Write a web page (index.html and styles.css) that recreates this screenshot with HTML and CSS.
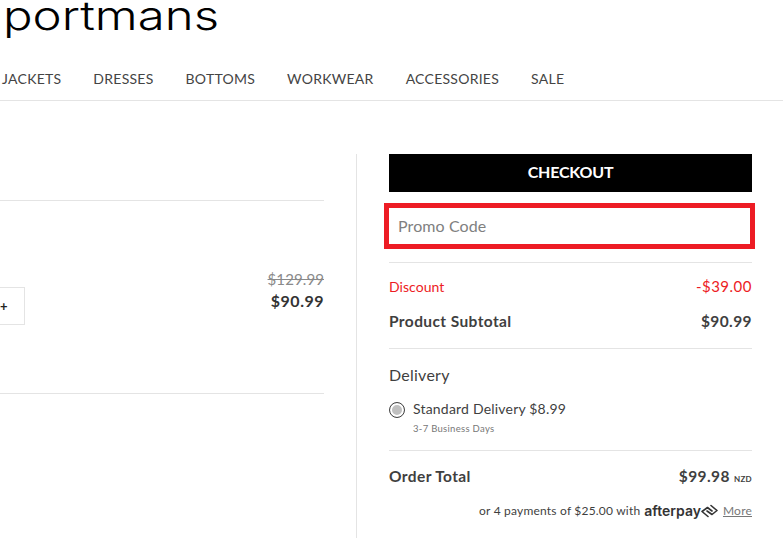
FILE: index.html
```html
<!DOCTYPE html>
<html lang="en">
<head>
<meta charset="utf-8">
<title>Portmans - Shopping Bag</title>
<link rel="stylesheet" href="styles.css">
</head>
<body>
<header class="site-header">
  <svg class="logo" width="222" height="42" viewBox="0 0 222 42" role="img" aria-label="portmans">
    <text class="logo-text" x="3" y="30" textLength="216" lengthAdjust="spacingAndGlyphs">portmans</text>
  </svg>
  <nav class="nav">
    <a>JACKETS</a><a>DRESSES</a><a>BOTTOMS</a><a>WORKWEAR</a><a>ACCESSORIES</a><a>SALE</a>
  </nav>
</header>
<main class="cart">
  <section class="items">
    <div class="item">
      <div class="qty"><span class="plus">+</span></div>
      <div class="item-price">
        <div class="was">$129.99</div>
        <div class="now">$90.99</div>
      </div>
    </div>
  </section>
  <aside class="summary">
    <button class="checkout">CHECKOUT</button>
    <div class="promo"><span class="promo-hint">Promo Code</span></div>
    <div class="totals">
      <div class="row discount"><span>Discount</span><span class="wide">-$39.00</span></div>
      <div class="row subtotal"><span>Product Subtotal</span><span>$90.99</span></div>
    </div>
    <div class="delivery">
      <div class="delivery-title">Delivery</div>
      <div class="option">
        <span class="radio"></span>
        <div>
          <div class="option-name">Standard Delivery $8.99</div>
          <div class="option-note">3-7 Business Days</div>
        </div>
      </div>
    </div>
    <div class="order">
      <div class="row total"><span>Order Total</span><span>$99.98 <small class="currency">NZD</small></span></div>
      <div class="afterpay">
        <span>or 4 payments of $25.00 with</span>
        <span class="ap-brand">afterpay<svg class="ap-icon" width="17" height="14" viewBox="0 0 17 14" aria-hidden="true"><path d="M10 1.5 L16 6.5 L11 10.5 L6 7 M7 12.5 L1 7.5 L6.5 3.5 L11 7" fill="none" stroke="#333" stroke-width="1.6" stroke-linejoin="round" stroke-linecap="round"/></svg></span>
        <a class="more">More</a>
      </div>
    </div>
  </aside>
</main>
</body>
</html>
```
FILE: styles.css
```css
* { box-sizing: border-box; }
html, body { margin: 0; padding: 0; }
body {
  width: 783px;
  height: 538px;
  overflow: hidden;
  background: #fff;
  color: #3f3f3f;
  font-family: "Lato", "Open Sans", sans-serif;
}
.site-header {
  height: 101px;
  border-bottom: 1px solid #e4e4e4;
}
.logo { display: block; }
.logo-text {
  font-family: "Inter", sans-serif;
  font-weight: 300;
  font-size: 40px;
  fill: #000;
}
.nav {
  display: flex;
  gap: 32px;
  padding: 28px 0 0 2px;
  font-size: 14px;
  line-height: 18px;
  letter-spacing: 0.26px;
  color: #444;
}
.cart {
  display: flex;
  padding-top: 53px;
}
.items {
  width: 324px;
  margin-right: 32px;
  padding-top: 46px;
}
.item {
  height: 194px;
  border-top: 1px solid #e4e4e4;
  border-bottom: 1px solid #e4e4e4;
  display: flex;
  justify-content: space-between;
  align-items: flex-start;
  padding-top: 68px;
}
.qty {
  width: 25px;
  height: 38px;
  margin-top: 18px;
  border: 1px solid #e4e4e4;
  border-left: 0;
  font-size: 13px;
  line-height: 36px;
  color: #222;
}
.plus { display: block; width: 7px; text-align: center; font-weight: 700; }
.item-price { text-align: right; }
.was {
  font-size: 15px;
  line-height: 20px;
  letter-spacing: 0.1px;
  color: #8a8a8a;
  text-decoration: line-through;
}
.now {
  font-size: 16px;
  line-height: 24px;
  font-weight: 700;
  letter-spacing: 0.5px;
  color: #333;
}
.summary {
  width: 396px;
  height: 384px;
  border-left: 1px solid #e4e4e4;
  padding-left: 32px;
}
.checkout {
  display: block;
  width: 100%;
  height: 38px;
  padding: 0 0 3px;
  border: 0;
  background: #000;
  color: #fff;
  font-family: inherit;
  font-size: 16px;
  font-weight: 700;
  letter-spacing: -0.2px;
}
.promo {
  margin: 11px -3px 0 -5px;
  height: 46px;
  border: 5px solid #ed1c24;
  padding: 0 9px 2px;
  display: flex;
  align-items: center;
}
.promo-hint {
  font-size: 16px;
  letter-spacing: 0.1px;
  color: #808080;
}
.totals {
  margin-top: 13px;
  padding-bottom: 15px;
  border-top: 1px solid #e4e4e4;
  border-bottom: 1px solid #e4e4e4;
}
.row {
  display: flex;
  justify-content: space-between;
  align-items: center;
}
.discount {
  height: 24px;
  margin-top: 11px;
  font-size: 14px;
  letter-spacing: 0.05px;
  color: #ed1c24;
}
.discount .wide { font-size: 15px; letter-spacing: 0.5px; }
.subtotal {
  height: 24px;
  margin-top: 11px;
  font-size: 15.5px;
  font-weight: 700;
  letter-spacing: 0.4px;
}
.delivery {
  padding: 15px 0 14px;
  border-bottom: 1px solid #e4e4e4;
}
.delivery-title {
  font-size: 16px;
  line-height: 22px;
  letter-spacing: 0.25px;
}
.option {
  display: flex;
  gap: 8px;
  margin-top: 13px;
}
.radio {
  width: 16px;
  height: 16px;
  margin-top: 3px;
  border: 1px solid #444;
  border-radius: 50%;
  background: #c0c0c0;
  box-shadow: inset 0 0 0 2px #fff;
  flex: none;
}
.option-name {
  font-size: 14px;
  line-height: 20px;
  letter-spacing: 0.2px;
}
.option-note {
  font-size: 9.5px;
  line-height: 14px;
  margin-top: 3px;
  letter-spacing: 0.3px;
  color: #777;
}
.total {
  height: 24px;
  margin-top: 13px;
  font-size: 15.5px;
  font-weight: 700;
  letter-spacing: 0.4px;
}
.currency {
  font-size: 8px;
  font-weight: 700;
  letter-spacing: 0.3px;
}
.afterpay {
  display: flex;
  justify-content: flex-end;
  align-items: center;
  gap: 4px;
  margin-top: 14px;
  font-size: 12px;
  line-height: 18px;
  letter-spacing: 0.2px;
}
.ap-brand {
  display: inline-flex;
  align-items: center;
  font-family: "Inter", sans-serif;
  font-weight: 600;
  font-size: 14px;
  letter-spacing: 0;
  color: #333;
}
.more {
  color: #777;
  margin-left: 1px;
  text-decoration: underline;
}
```
